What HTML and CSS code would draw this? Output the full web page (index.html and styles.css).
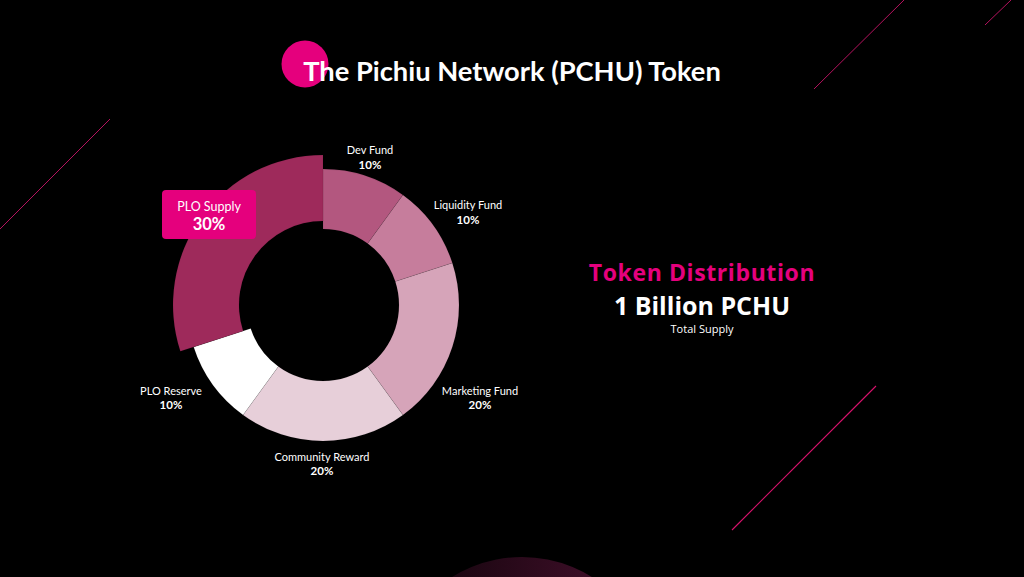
FILE: index.html
```html
<!DOCTYPE html>
<html lang="en">
<head>
<meta charset="utf-8">
<title>The Pichiu Network (PCHU) Token</title>
<link rel="stylesheet" href="styles.css">
</head>
<body>
<div class="stage">
  <svg class="decor" width="1024" height="577" viewBox="0 0 1024 577" aria-hidden="true">
    <defs>
      <linearGradient id="glow" x1="0" y1="0" x2="1" y2="0">
        <stop offset="0" stop-color="#0c0307"/>
        <stop offset="1" stop-color="#4a1130"/>
      </linearGradient>
    </defs>
    <line x1="814" y1="89" x2="904" y2="0" class="slash"/>
    <line x1="985" y1="25" x2="1011" y2="0" class="slash"/>
    <line x1="0" y1="229" x2="110" y2="119" class="slash"/>
    <line x1="732" y1="530" x2="876" y2="386" class="slash slash-bright"/>
    <circle cx="522" cy="689" r="132" fill="url(#glow)"/>
    <circle cx="305" cy="64" r="23.5" fill="#e5007d"/>
  </svg>

  <header class="header">
    <h1 class="title">The Pichiu Network (PCHU) Token</h1>
  </header>

  <main class="content">
    <svg class="chart" width="560" height="400" viewBox="0 88 560 400" role="img" aria-label="Token distribution donut chart">
      <g class="slices">
        <path fill="#b3577f" d="M323,169 A136,136 0 0 1 402.94,194.98 L367.67,243.52 A76,76 0 0 0 323,229 Z"/>
        <path fill="#c67d9c" d="M402.94,194.98 A136,136 0 0 1 452.35,262.98 L395.28,281.52 A76,76 0 0 0 367.67,243.52 Z"/>
        <path fill="#d6a4b9" d="M452.35,262.98 A136,136 0 0 1 402.94,415.02 L367.67,366.48 A76,76 0 0 0 395.28,281.52 Z"/>
        <path fill="#e7cfd9" d="M402.94,415.02 A136,136 0 0 1 243.06,415.02 L278.33,366.48 A76,76 0 0 0 367.67,366.48 Z"/>
        <path fill="#ffffff" d="M243.06,415.02 A136,136 0 0 1 193.65,347.02 L250.72,328.48 A76,76 0 0 0 278.33,366.48 Z"/>
        <path fill="#9e2a5b" d="M180.34,351.35 A150,150 0 0 1 323,155 L323,221 A84,84 0 0 0 243.11,330.96 Z"/>
      </g>

      <g class="labels">
        <text class="lbl" x="370" y="154">Dev Fund</text>
        <text class="pct" x="370" y="169">10%</text>
        <text class="lbl" x="468" y="209">Liquidity Fund</text>
        <text class="pct" x="468" y="224">10%</text>
        <text class="lbl" x="480" y="395">Marketing Fund</text>
        <text class="pct" x="480" y="409">20%</text>
        <text class="lbl" x="322" y="461">Community Reward</text>
        <text class="pct" x="322" y="475">20%</text>
        <text class="lbl" x="171" y="395">PLO Reserve</text>
        <text class="pct" x="171" y="409">10%</text>
      </g>

      <g class="callout">
        <rect x="162" y="190" width="94" height="49" rx="4" fill="#e5007d"/>
        <text class="lbl lbl-lg" x="209" y="211">PLO Supply</text>
        <text class="pct pct-lg" x="209" y="229.5">30%</text>
      </g>
    </svg>

    <section class="summary">
      <p class="summary-head">Token Distribution</p>
      <p class="summary-value">1 Billion PCHU</p>
      <p class="summary-note">Total Supply</p>
    </section>
  </main>
</div>
</body>
</html>
```

FILE: styles.css
```css
* { box-sizing: border-box; }

html, body {
  margin: 0;
  padding: 0;
  background: #000;
}

body {
  font-family: "Lato", "Open Sans", "Liberation Sans", sans-serif;
  color: #fff;
}

.stage {
  position: relative;
  width: 1024px;
  height: 577px;
  overflow: hidden;
  background: #000;
}

.decor {
  position: absolute;
  left: 0;
  top: 0;
  z-index: 0;
  pointer-events: none;
}

.slash {
  stroke: #b5125e;
  stroke-width: 1;
}

.slash-bright {
  stroke: #d8126c;
  stroke-width: 1.1;
}

.header {
  position: relative;
  z-index: 1;
  padding-top: 54px;
  text-align: center;
}

.title {
  margin: 0;
  font-size: 27.3px;
  line-height: 34px;
  font-weight: 700;
  color: #fff;
  letter-spacing: 0;
}

.content {
  position: relative;
  z-index: 1;
  display: flex;
  align-items: flex-start;
}

.chart {
  display: block;
  flex: 0 0 560px;
}

.chart text {
  text-anchor: middle;
  fill: #fff;
  font-family: "Lato", "Open Sans", "Liberation Sans", sans-serif;
}

.lbl {
  font-size: 11px;
  font-weight: 400;
}

.pct {
  font-size: 11.5px;
  font-weight: 700;
}

.lbl-lg {
  font-size: 12.5px;
}

.pct-lg {
  font-size: 16.5px;
}

.slices path {
  stroke: rgba(0, 0, 0, 0.12);
  stroke-width: 0.6;
}

.summary {
  width: 284px;
  margin-top: 171px;
  text-align: center;
  font-family: "Open Sans", "Lato", "Liberation Sans", sans-serif;
}

.summary p {
  margin: 0;
}

.summary-head {
  font-size: 23px;
  line-height: 26px;
  font-weight: 700;
  letter-spacing: 0.6px;
  color: #e5007d;
}

.summary-value {
  margin-top: 5px !important;
  font-size: 25px;
  line-height: 30px;
  font-weight: 700;
  color: #fff;
}

.summary-note {
  margin-top: 2px !important;
  font-size: 11px;
  line-height: 14px;
  color: #fff;
}
```
